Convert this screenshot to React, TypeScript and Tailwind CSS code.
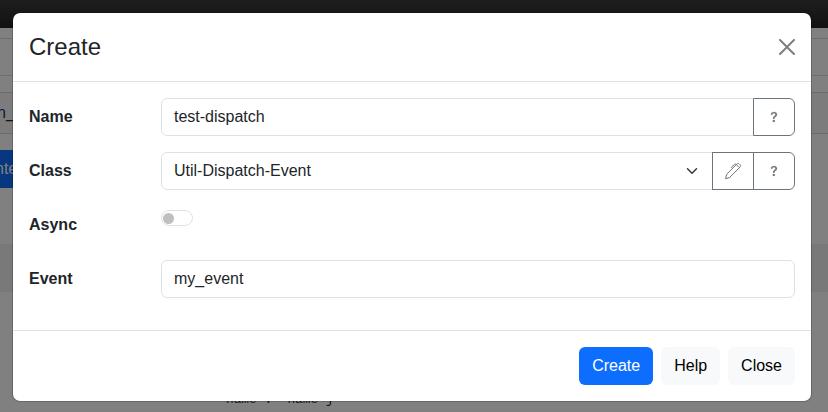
import React from "react";
import { BsQuestion } from "react-icons/bs";

function Page() {
  return (
    <div className="h-[412px] overflow-hidden bg-[#808080]">
      <div className="h-7 bg-gradient-to-b from-[#1e1e1e] to-[#111111]" />
      <div className="h-[11px] border-b border-[#6e6e6e]" />
      <div className="h-[37px] border-b border-[#6e6e6e]" />
      <div className="h-[17px] border-b border-[#6a6a6a]" />
      <div className="flex h-[41px] items-center border-b border-[#6a6a6a] bg-[#7c7c7c]">
        <span className="-ml-[3px] text-base text-[#07193a]">
          n<span className="text-[#111315]">_</span>
        </span>
      </div>
      <div className="mt-4 flex h-[38px] w-[60px] items-center bg-[#07377f]">
        <span className="-ml-[5px] text-base text-[#808080]">nte</span>
      </div>
      <div className="mt-14 h-12 bg-[#797979]" />
      <pre className="mt-[98px] pl-[226px] font-['Liberation_Mono',monospace] text-[12.8px] leading-5 text-[#111315]">
        {"name :  name j"}
      </pre>
    </div>
  );
}

function Label({ children }: { children: React.ReactNode }) {
  return <span className="w-[132px] shrink-0 pt-[7px] font-bold leading-6">{children}</span>;
}

function HelpButton() {
  return (
    <button className="-ml-px flex h-[38px] w-[42px] shrink-0 items-center justify-center rounded-r-md border border-[#6c757d] text-[#6c757d]">
      <BsQuestion size={18} strokeWidth={0.2} />
    </button>
  );
}

function PenIcon() {
  return (
    <svg width="16" height="16" viewBox="0 0 16 16" fill="none" stroke="currentColor" strokeLinecap="round" strokeLinejoin="round">
      <path d="M.6 15.4 1.7 11.2 12 .9c.7-.6 1.5-.6 2.2 0l.9.9c.6.7.6 1.5 0 2.2L4.8 14.3Z" />
      <path d="M6.2 4.6 9.6 1.2c.4-.4.9-.4 1.3 0l2.9 2.9" />
    </svg>
  );
}

function Dialog() {
  return (
    <div className="absolute left-3 top-3 flex h-[390px] w-[800px] flex-col rounded-lg border border-black/20 bg-white bg-clip-padding text-base text-[#212529]">
      <header className="flex h-[69px] shrink-0 items-center justify-between border-b border-[#dee2e6] px-4">
        <h1 className="text-2xl leading-9">Create</h1>
        <button aria-label="Close" className="text-black/50">
          <svg width="16" height="16" viewBox="0 0 16 16" fill="currentColor">
            <path d="M.293.293a1 1 0 0 1 1.414 0L8 6.586 14.293.293a1 1 0 1 1 1.414 1.414L9.414 8l6.293 6.293a1 1 0 0 1-1.414 1.414L8 9.414l-6.293 6.293a1 1 0 0 1-1.414-1.414L6.586 8 .293 1.707a1 1 0 0 1 0-1.414z" />
          </svg>
        </button>
      </header>
      <main className="flex flex-1 flex-col gap-4 p-4">
        <div className="flex h-[38px]">
          <Label>Name</Label>
          <div className="flex flex-1 items-center rounded-l-md border border-[#dee2e6] px-3">test-dispatch</div>
          <HelpButton />
        </div>
        <div className="flex h-[38px]">
          <Label>Class</Label>
          <div className="flex flex-1 items-center justify-between rounded-l-md border border-[#dee2e6] px-3">
            Util-Dispatch-Event
            <svg width="16" height="12" viewBox="0 0 16 16" fill="none" stroke="#343a40" strokeWidth="2" strokeLinecap="round" strokeLinejoin="round">
              <path d="m2 5 6 6 6-6" />
            </svg>
          </div>
          <button aria-label="Edit" className="-ml-px flex h-[38px] w-[42px] shrink-0 items-center justify-center border border-[#6c757d] text-[#6c757d]">
            <PenIcon />
          </button>
          <HelpButton />
        </div>
        <div className="flex h-[38px]">
          <Label>Async</Label>
          <div className="mt-1 flex h-4 w-8 items-center rounded-full border border-[#dee2e6] px-px">
            <span className="size-[11px] rounded-full bg-[#bfbfbf]" />
          </div>
        </div>
        <div className="flex h-[38px]">
          <Label>Event</Label>
          <div className="flex flex-1 items-center rounded-md border border-[#dee2e6] px-3">my_event</div>
        </div>
      </main>
      <footer className="flex h-[71px] shrink-0 items-center justify-end gap-2 border-t border-[#dee2e6] px-4">
        <button className="h-[38px] rounded-md bg-[#0d6efd] px-[13px] text-white">Create</button>
        <button className="h-[38px] rounded-md bg-[#f8f9fa] px-[13px] text-black">Help</button>
        <button className="h-[38px] rounded-md bg-[#f8f9fa] px-[13px] text-black">Close</button>
      </footer>
    </div>
  );
}

export default function App() {
  return (
    <div className="relative h-[412px] w-[828px] overflow-hidden font-['Liberation_Sans',Arial,sans-serif]">
      <Page />
      <Dialog />
    </div>
  );
}
